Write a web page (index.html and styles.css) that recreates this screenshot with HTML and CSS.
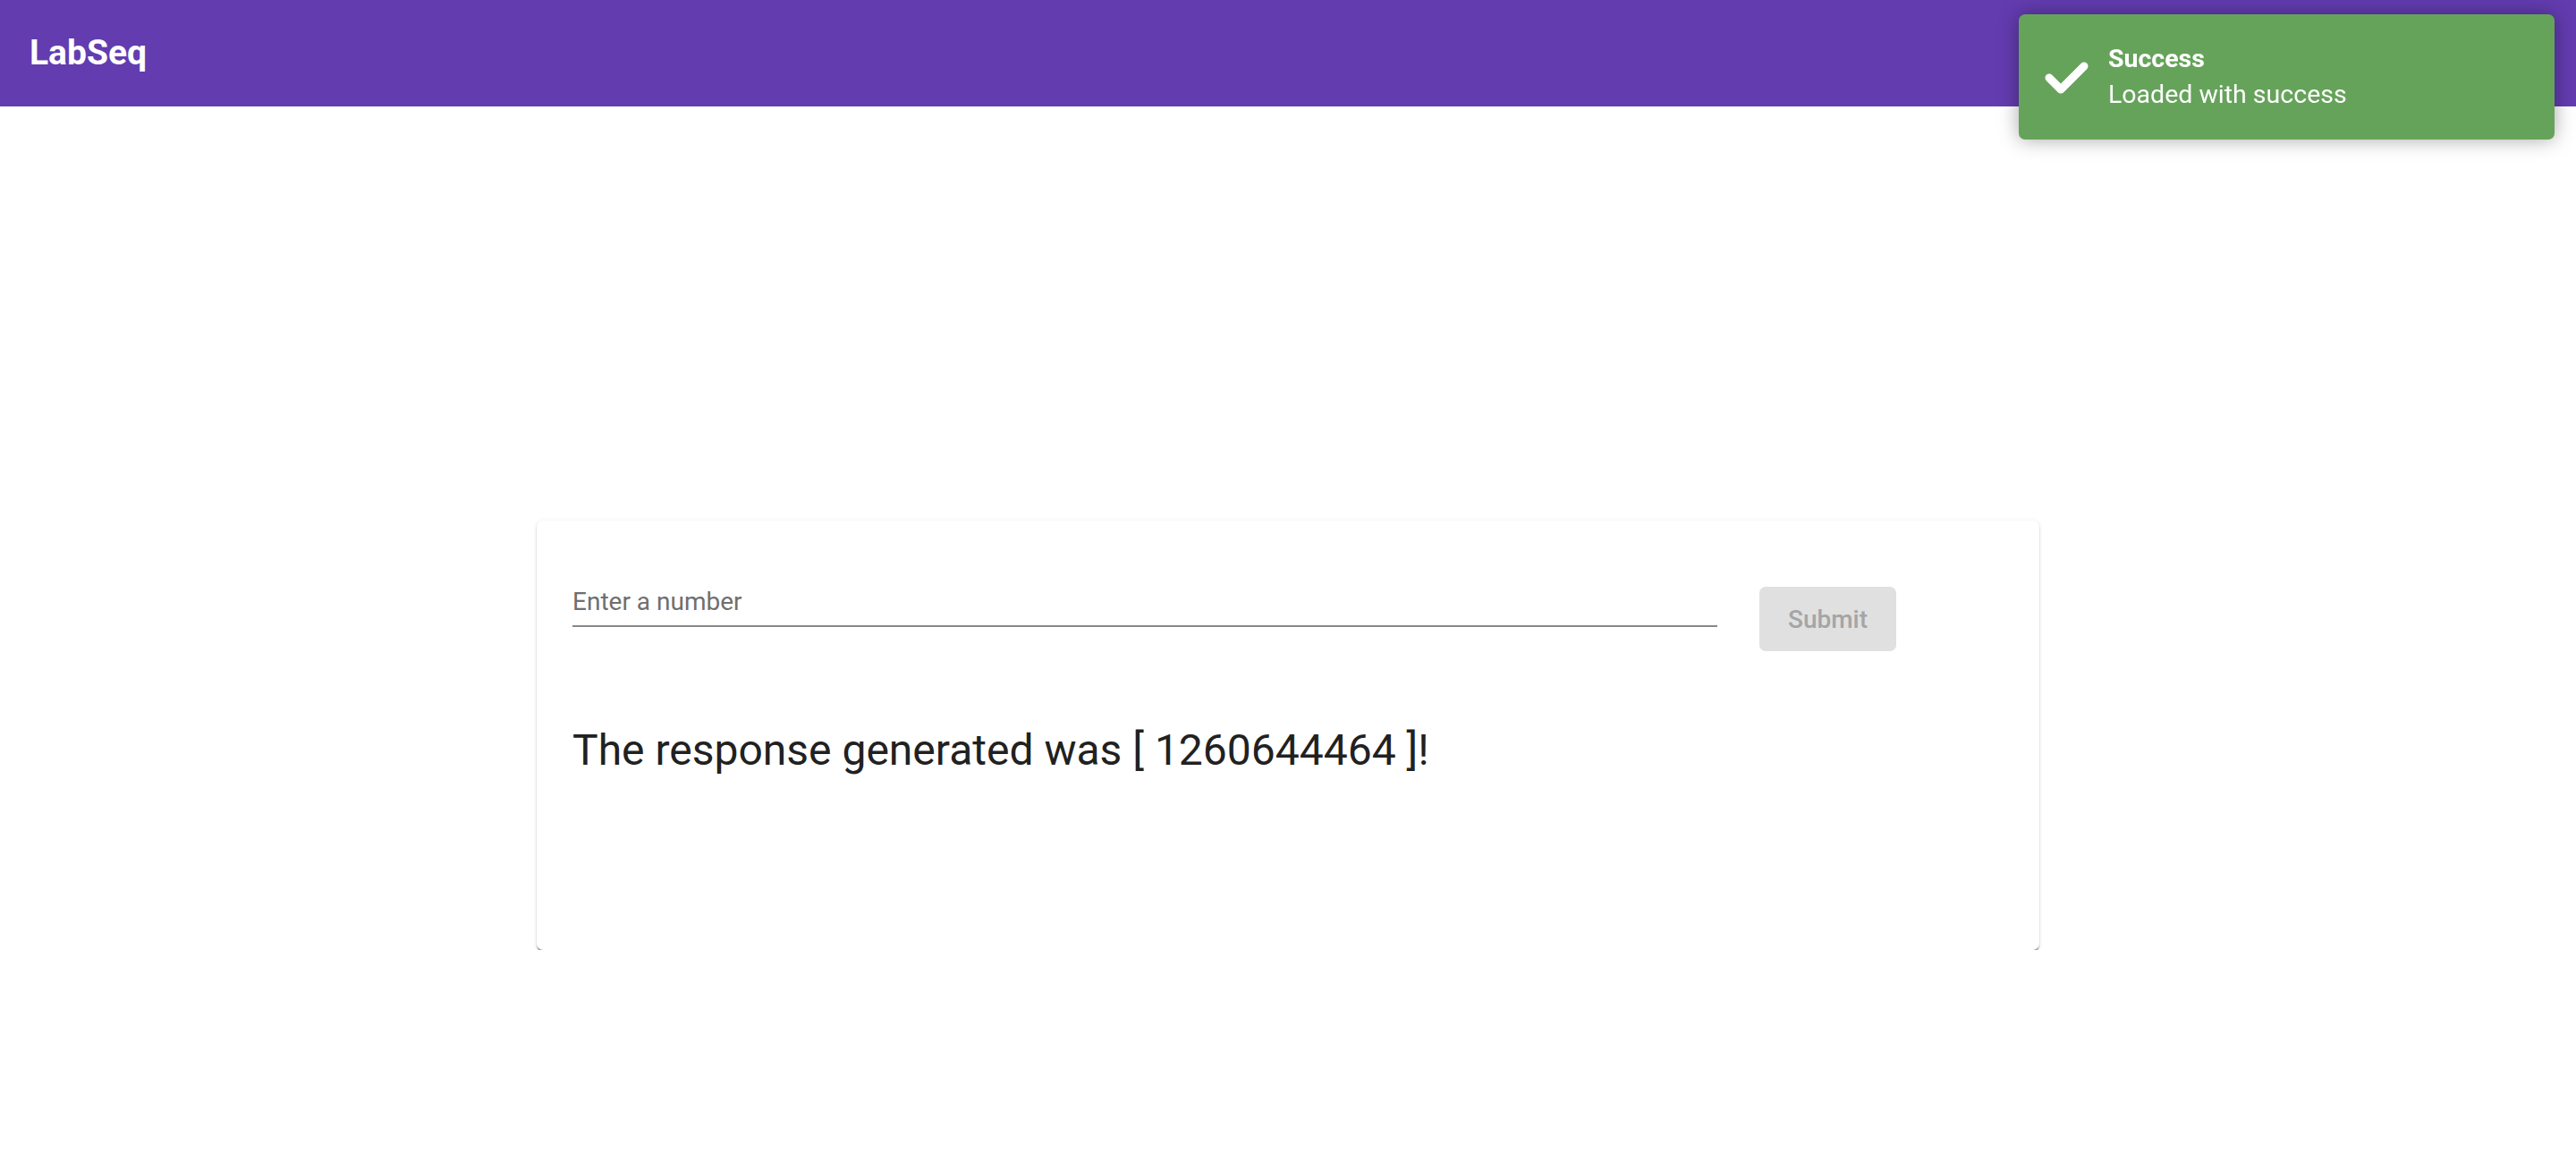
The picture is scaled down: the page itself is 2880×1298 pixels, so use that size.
FILE: index.html
```html
<!DOCTYPE html>
<html lang="en">
<head>
<meta charset="utf-8">
<title>LabSeq</title>
<link rel="stylesheet" href="styles.css">
</head>
<body>
<header class="toolbar">
  <span class="toolbar-title">LabSeq</span>
</header>
<main class="content">
  <section class="card">
    <div class="form-row">
      <div class="field">
        <span class="field-label">Enter a number</span>
      </div>
      <button class="submit-btn" disabled>Submit</button>
    </div>
    <p class="result">The response generated was [ 1260644464 ]!</p>
  </section>
</main>
<div class="toast">
  <svg class="toast-icon" width="50" height="40" viewBox="0 0 50 40">
    <polyline points="6,21 19,34 45,8" fill="none" stroke="#fff" stroke-width="9" stroke-linecap="round" stroke-linejoin="round"/>
  </svg>
  <div class="toast-text">
    <div class="toast-title">Success</div>
    <div class="toast-message">Loaded with success</div>
  </div>
</div>
</body>
</html>
```

FILE: styles.css
```css
html, body {
  margin: 0;
  padding: 0;
  background: #ffffff;
  font-family: Roboto, "Liberation Sans", Arial, sans-serif;
}

.toolbar {
  height: 119px;
  background: #633cb0;
  display: flex;
  align-items: center;
  padding-left: 33px;
  box-sizing: border-box;
}

.toolbar-title {
  color: #ffffff;
  font-size: 39px;
  font-weight: 700;
  line-height: 1;
}

.content {
  display: flex;
  justify-content: center;
  padding-top: 463px;
}

.card {
  width: 1680px;
  height: 480px;
  box-sizing: border-box;
  padding: 74px 40px 40px 40px;
  background: #ffffff;
  border-radius: 7px;
  box-shadow: 0 3px 2px -1px rgba(0,0,0,0.5), 0 1px 2px 0 rgba(0,0,0,0.14), 0 1px 6px 0 rgba(0,0,0,0.08);
}

.form-row {
  display: flex;
  align-items: flex-start;
  gap: 47px;
}

.field {
  width: 1280px;
  padding-top: 1px;
  padding-bottom: 10px;
  border-bottom: 2px solid #888888;
}

.field-label {
  display: block;
  font-size: 28px;
  line-height: 32px;
  color: #6f6f6f;
}

.submit-btn {
  width: 153px;
  height: 72px;
  border: none;
  border-radius: 7px;
  background: #e0e0e0;
  color: #a5a5a5;
  font-family: Roboto, "Liberation Sans", Arial, sans-serif;
  font-size: 28px;
  font-weight: 500;
  padding: 0;
}

.result {
  margin: 83px 0 0 0;
  font-size: 48px;
  line-height: 56px;
  color: #212121;
  font-weight: 400;
}

.toast {
  position: fixed;
  top: 16px;
  right: 24px;
  width: 599px;
  height: 140px;
  box-sizing: border-box;
  background: #66a35a;
  border-radius: 7px;
  box-shadow: 0 0 22px rgba(0,0,0,0.35);
  display: flex;
  align-items: flex-start;
  padding: 30px 20px 0 28px;
  color: #ffffff;
}

.toast-icon {
  margin-top: 20px;
  flex: none;
}

.toast-text {
  margin-left: 22px;
  font-size: 28.5px;
  line-height: 40px;
}

.toast-title {
  font-weight: 700;
}

.toast-message {
  font-weight: 400;
}
```
